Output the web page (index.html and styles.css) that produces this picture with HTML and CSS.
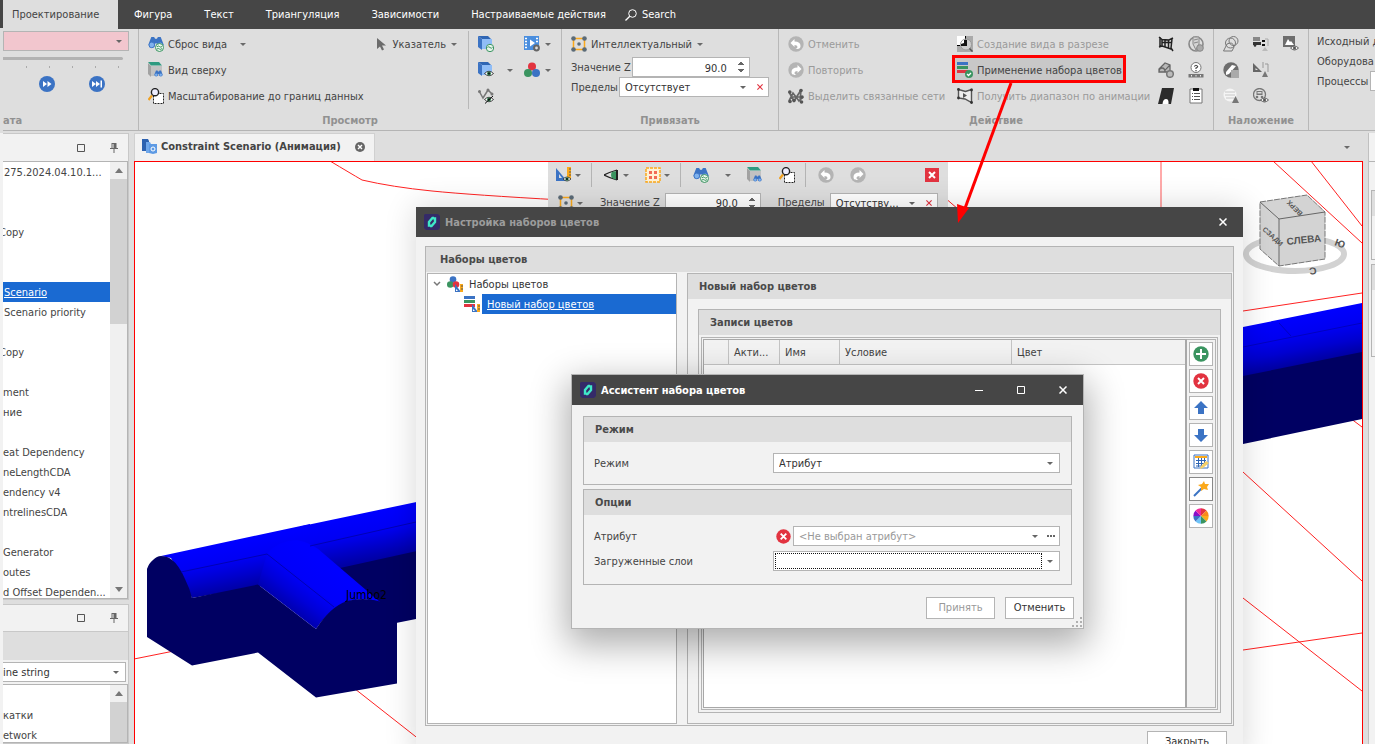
FILE: index.html
```html
<!DOCTYPE html>
<html lang="ru">
<head>
<meta charset="utf-8">
<title>Настройка наборов цветов</title>
<link rel="stylesheet" href="styles.css">
</head>
<body>
<svg class="sprite" aria-hidden="true">
  <symbol id="binocular" viewBox="0 0 16 16"><path d="M3 1h3l1 2h2l1-2h3l2 5 1 3-1 3H10L9 8H7l-1 4H1L0 9l1-3z" fill="#3b73c4"/><circle cx="3.5" cy="9.5" r="3" fill="#7fb2ee" stroke="#3b73c4"/><circle cx="12.5" cy="9.5" r="3" fill="#7fb2ee" stroke="#3b73c4"/></symbol>
  <symbol id="reset" viewBox="0 0 16 16"><use href="#binocular" width="16" height="15"/><circle cx="11.500" cy="11.500" r="4" fill="#e8f5ec" stroke="#3a9460"/><path d="M9 11q1.200-1.800 2.500-.5t2.500 0M9 13q1.200-1 2.500 0t2.500-.5" fill="none" stroke="#3a9460"/></symbol>
  <symbol id="cubeview" viewBox="0 0 16 16"><path d="M0 1l3 3v11l-3-3z" fill="#a2a2a2"/><path d="M3 4h11v10H3z" fill="#c2c2c2"/><path d="M0 0h11l3 3.500H3z" fill="#2e9a80"/><use href="#binocular" x="5" y="8" width="11" height="8"/></symbol>
  <symbol id="zoomext" viewBox="0 0 16 16"><path d="M5.500 5.500h10v10h-10z" fill="#fff" stroke="#222" stroke-dasharray="2 1"/><circle cx="7" cy="4.200" r="3.600" fill="#eef" stroke="#222" stroke-width="1.400"/><path d="M4 7.500L.500 12" stroke="#f0a020" stroke-width="2.200"/></symbol>
  <symbol id="pointer" viewBox="0 0 16 16"><path d="M4 2v11l3-2.500 2 4 2-1-2-4h4z" fill="#6c6c6c"/></symbol>
  <symbol id="cube" viewBox="0 0 16 16"><path d="M0 0h10l3 3H4z" fill="#2f66b4"/><path d="M0 0l4 3v11l-4-3z" fill="#3b73c4"/><path d="M4 3h10v10H4z" fill="#8fbdf7"/></symbol>
  <symbol id="cuberef" viewBox="0 0 16 16"><use href="#cube"/><circle cx="12" cy="12" r="3.700" fill="#e8f5ec" stroke="#3a9460"/><path d="M9.500 11.500q1.200-1.500 2.500 0t2.500 0" fill="none" stroke="#3a9460"/></symbol>
  <symbol id="eye" viewBox="0 0 16 16"><path d="M0 8q8-8 16 0-8 8-16 0z" fill="#fff" stroke="#222" stroke-width="1.500"/><circle cx="8" cy="8" r="3.500" fill="#2e7d4c"/><circle cx="8" cy="8" r="1.800" fill="#111"/></symbol>
  <symbol id="grayeye" viewBox="0 0 16 16"><path d="M0 8q8-8 16 0-8 8-16 0z" fill="#eee" stroke="#555" stroke-width="1.800"/><circle cx="8" cy="8" r="3" fill="#555"/></symbol>
  <symbol id="cubeeye" viewBox="0 0 16 16"><use href="#cube"/><use href="#eye" x="6" y="7" width="10" height="9"/></symbol>
  <symbol id="linehide" viewBox="0 0 16 16"><path d="M1 3l4 7 5-8 4 4" fill="none" stroke="#777" stroke-width="1.500"/><circle cx="1.500" cy="3.500" r="1.500" fill="#777"/><circle cx="10" cy="2" r="1.500" fill="#777"/><circle cx="14" cy="6" r="1.500" fill="#777"/><use href="#eye" x="6" y="7" width="10" height="9"/><path d="M7 15.500L15 8" stroke="#111"/></symbol>
  <symbol id="film" viewBox="0 0 16 16"><path d="M0 0h15v14H0z" fill="#4a8ede"/><path d="M1 2.500h2M1 5.500h2M1 8.500h2M1 11.500h2M12 2.500h2M12 5.500h2" stroke="#fff" stroke-width="1.300"/><path d="M6 3.500l5 3.500-5 3.500z" fill="#fff"/><circle cx="12.500" cy="12" r="2.400" fill="#dedede" stroke="#666" stroke-width="2"/></symbol>
  <symbol id="rgb" viewBox="0 0 16 16"><circle cx="8" cy="4.500" r="4" fill="#e23340"/><circle cx="4" cy="11" r="4" fill="#3a9460"/><circle cx="12" cy="11" r="4" fill="#3b73c4"/></symbol>
  <symbol id="snap" viewBox="0 0 16 16"><path d="M2.500 2.500h11v11h-11z" fill="none" stroke="#fba91b" stroke-width="1.500"/><g fill="#5b6b78"><circle cx="2.500" cy="2.500" r="2.300"/><circle cx="13.500" cy="2.500" r="2.300"/><circle cx="2.500" cy="13.500" r="2.300"/><circle cx="13.500" cy="13.500" r="2.300"/><circle cx="8" cy="8" r="1.800"/></g></symbol>
  <symbol id="undo" viewBox="0 0 16 16"><circle cx="8" cy="8" r="7.700" fill="#b4b4b4"/><path d="M2.500 7L6.500 3v2.500c4 0 6 1.500 6 4.500s-2.500 3-5 3c3-1 2.500-4-1-4V11z" fill="#fff"/></symbol>
  <symbol id="redo" viewBox="0 0 16 16"><g transform="translate(16 0) scale(-1 1)"><use href="#undo"/></g></symbol>
  <symbol id="network" viewBox="0 0 16 16"><path d="M1 4l5 9 7-11-1 11M1 13l4-8 6 8 4-4M3 9h9" fill="none" stroke="#666" stroke-width="1.700"/><g fill="#555"><circle cx="1.800" cy="4" r="1.800"/><circle cx="13" cy="2.500" r="1.800"/><circle cx="14" cy="9" r="1.800"/><circle cx="2" cy="13.500" r="1.800"/><circle cx="13.500" cy="14" r="1.800"/><circle cx="6" cy="12.500" r="1.800"/></g></symbol>
  <symbol id="section" viewBox="0 0 16 16"><path d="M0 0h16v16H0z" fill="#aaa"/><path d="M0 0h8v9H0z" fill="#fff"/><path d="M8 0h1v4H8zM0 9h3v1H0z" fill="#000"/><circle cx="9" cy="8.500" r="5.500" fill="#fff" fill-opacity=".4" stroke="#999"/><path d="M10 4v6H4v-2l3-1V4z" fill="#111"/><path d="M12.500 12.500l3 3" stroke="#555" stroke-width="1.500"/></symbol>
  <symbol id="bars" viewBox="0 0 16 16"><path d="M0 0h11v3H0z" fill="#3b73c4"/><path d="M0 4h11v3H0z" fill="#3a9460"/><path d="M0 8h11v3H0z" fill="#e23340"/></symbol>
  <symbol id="barsok" viewBox="0 0 16 16"><use href="#bars"/><circle cx="12" cy="12" r="4" fill="#3a9460"/><path d="M10 12l1.500 1.500L14 11" fill="none" stroke="#fff" stroke-width="1.300"/></symbol>
  <symbol id="range" viewBox="0 0 16 16"><path d="M1.500 1.500l7 2 6-2v13L8 11l-6.500-1z" fill="#eee" stroke="#555" stroke-width="1.400"/><path d="M6 5l4 2.500L6 10z" fill="#555"/><g fill="#333"><circle cx="1.500" cy="1.500" r="1.400"/><circle cx="14.500" cy="2" r="1.400"/><circle cx="1.500" cy="10" r="1.400"/><circle cx="14.500" cy="14.500" r="1.400"/></g></symbol>
  <symbol id="mesh" viewBox="0 0 16 16"><path d="M1 1l3 2.500 7 .5 4-2M1 11l3-1M4 3.500V10l9 3M14 3l-1 9 2 3M2 1v10M4 6.500h10M7 3.500V11M10.500 4v8" fill="none" stroke="#222" stroke-width="1.500"/></symbol>
  <symbol id="drill" viewBox="0 0 16 16"><circle cx="8" cy="8" r="7" fill="none" stroke="#888" stroke-width="1.600"/><path d="M5 1h6v7l-3 6-3-6zM6 4l4-1M6 7l4-1" fill="#d4d4d4" stroke="#888"/><circle cx="12" cy="12" r="3.300" fill="#aaa" stroke="#888"/></symbol>
  <symbol id="solidadd" viewBox="0 0 16 16"><path d="M1 10V7l6-6 5 2v7zM1 10q0-4 3-4t3 4l0-2 5-5" fill="#b8b8b8" stroke="#666" stroke-width="1.300"/><circle cx="12" cy="12" r="3.300" fill="#bbb" stroke="#777" stroke-width="1.500"/></symbol>
  <symbol id="query" viewBox="0 0 16 16"><circle cx="8" cy="5.500" r="5" fill="#fff" stroke="#777"/><path d="M6.300 4.500q1.700-2.500 3.400 0-.2 1-1.700 1.500v1M8 8v1.200" stroke="#444" fill="none" stroke-width="1.200"/><path d="M.500 12h15v3.500H.500z" fill="#777"/><path d="M3.500 13v1.500M8 13v1.500M12.500 13v1.500" stroke="#eee"/></symbol>
  <symbol id="portal" viewBox="0 0 16 16"><path d="M4 0h12l-3 16H0z" fill="#2b2b2b"/><path d="M4.500 16q.5-5 3.500-5t2.500 5z" fill="#fff"/></symbol>
  <symbol id="clip" viewBox="0 0 16 16"><path d="M2 1h12v14H2z" fill="#fff" stroke="#777"/><path d="M5 0h6v3H5z" fill="#111"/><path d="M4 5.500h1M6 5.500h6M4 8.500h1M6 8.500h6M4 11.500h1M6 11.500h6" stroke="#555"/></symbol>
  <symbol id="contours" viewBox="0 0 16 16"><g fill="none" stroke="#777"><circle cx="10.500" cy="5" r="4.500"/><circle cx="7.500" cy="7" r="5"/><path d="M.500 15L4 8q6-3 7 3l-2 4z"/></g></symbol>
  <symbol id="truck" viewBox="0 0 16 16"><path d="M0 1h7v4H0z" fill="#888"/><path d="M0 6h8v3H0z" fill="#333"/><circle cx="2" cy="9.500" r="1.300" fill="#333"/><path d="M9 4h3v2H9zM9 8h3v2H9z" fill="#111"/><path d="M12 3h3v7" fill="none" stroke="#aaa"/><path d="M9 15l3-4 3 4z" fill="#bbb"/></symbol>
  <symbol id="imgeye" viewBox="0 0 16 16"><path d="M0 0h12v11H0z" fill="#6d6d6d"/><path d="M2 9l3-6 2 3 1-1 3 4z" fill="#fff"/><use href="#grayeye" x="7" y="8" width="9" height="8"/></symbol>
  <symbol id="halfcircle" viewBox="0 0 16 16"><circle cx="8" cy="8" r="7.700" fill="#6d6d6d"/><path d="M3 10l6-7 4 1-7 8-3 1z" fill="#fff"/><path d="M8 8h8v8H8z" fill="#aaa"/></symbol>
  <symbol id="ruler" viewBox="0 0 16 16"><path d="M0 1l9 9H0z" fill="#666"/><path d="M2.500 6v2H5z" fill="#dedede"/><path d="M9 1h2M9 3h2M9 5h2M12 2h3v8" stroke="#999" fill="none"/><path d="M9 15l3-6 3 6z" fill="#777"/></symbol>
  <symbol id="globe" viewBox="0 0 16 16"><circle cx="7" cy="7" r="6.500" fill="#f5f5f5"/><path d="M2 4h10M2 7h10M3 10h8" stroke="#c8c8c8"/><path d="M9 15l3.500-7 3.500 7z" fill="#777"/></symbol>
  <symbol id="dumper" viewBox="0 0 16 16"><circle cx="6.500" cy="6.500" r="6" fill="none" stroke="#777" stroke-width="1.300"/><path d="M3.500 3h6v4h-6z" fill="#777"/><path d="M4.500 4h4v1.500h-4z" fill="#dedede"/><circle cx="4" cy="9" r="1.300" fill="#777"/><circle cx="9" cy="9" r="1.300" fill="#777"/><use href="#grayeye" x="7" y="8" width="9" height="8"/></symbol>
  <symbol id="logo" viewBox="0 0 16 16"><path d="M1 0h13l2 2v12l-2 2H2l-2-2V1z" fill="#342a68"/><path d="M6.500 11.500H5L5 8l3.500-4H10M9.500 4.500H11V8l-3.500 4H6" fill="none" stroke="#3fe8c8" stroke-width="2.400"/></symbol>
  <symbol id="tabicon" viewBox="0 0 16 16"><path d="M0 0h6l1 2v10H0z" fill="#2d62b0"/><path d="M4 3h4l1 2h3v9H4z" fill="#6fa7ea"/><path d="M7 5h8v9l-4 1-4-1z" fill="#5d9ae4"/><circle cx="11" cy="10" r="2" fill="none" stroke="#fff"/></symbol>
  <symbol id="design" viewBox="0 0 16 16"><path d="M0 1l11 13H0z" fill="#3b73c4"/><path d="M3 7v4h3z" fill="#dedede"/><path d="M11 0h4v12h-4z" fill="#fba91b"/><path d="M13 2h2M13 5h2M13 8h2" stroke="#555"/><use href="#eye" x="6" y="8" width="10" height="8"/></symbol>
  <symbol id="sideeye" viewBox="0 0 16 16"><path d="M0 8q6-3 13-5M0 8q6 3 13 5" fill="none" stroke="#222" stroke-width="1.300"/><path d="M8 5q5-1 5-1v9l-5-2q-2-3 0-6z" fill="#3a9460"/><path d="M12 3h2v10h-2z" fill="#222"/></symbol>
  <symbol id="select4" viewBox="0 0 16 16"><path d="M1 1h14v14H1z" fill="#fff2d5" stroke="#fba91b" stroke-width="1.500" stroke-dasharray="3 1"/><path d="M4 4h3v3H4zM9 4h3v3H9zM4 9h3v3H4zM9 9h3v3H9z" fill="#f26b55"/></symbol>
  <symbol id="xsquare" viewBox="0 0 16 16"><path d="M1 1h14v14H1z" fill="#e23340"/><path d="M5 5l6 6M11 5l-6 6" stroke="#fff" stroke-width="2"/></symbol>
  <symbol id="xcircle" viewBox="0 0 16 16"><circle cx="8" cy="8" r="7.700" fill="#e23340"/><path d="M5 5l6 6M11 5l-6 6" stroke="#fff" stroke-width="2"/></symbol>
  <symbol id="add" viewBox="0 0 16 16"><circle cx="8" cy="8" r="7.700" fill="#3a9460"/><path d="M8 3v10M3 8h10" stroke="#fff" stroke-width="2"/></symbol>
  <symbol id="up" viewBox="0 0 16 16"><path d="M8 1l7 7h-4v6H5V8H1z" fill="#3b73c4"/></symbol>
  <symbol id="down" viewBox="0 0 16 16"><path d="M8 15l7-7h-4V2H5v6H1z" fill="#3b73c4"/></symbol>
  <symbol id="tableedit" viewBox="0 0 16 16"><path d="M1 1h14v13H1z" fill="#fff" stroke="#3b73c4"/><path d="M2 2h12v2H2z" fill="#fba91b"/><path d="M3 6.500h10M3 9.500h8M3 12h5M5.500 4v9M8.500 4v9M11.500 4v6" stroke="#2f66b4"/><path d="M7 15l1-3 5-5 3 2-6 5z" fill="#f5cf66"/></symbol>
  <symbol id="wand" viewBox="0 0 16 16"><path d="M1 15l8-8" stroke="#3b73c4" stroke-width="2"/><path d="M11 0l1 3 4 0-2 3 1 3-4-1-3 2V6L5 4l4-1z" fill="#fba91b"/></symbol>
  <symbol id="wheel" viewBox="0 0 16 16"><path d="M8 8V.300A7.700 7.700 0 0 1 13.500 2.500z" fill="#e23340"/><path d="M8 8l5.500-5.500A7.700 7.700 0 0 1 15.700 8z" fill="#f98a1c"/><path d="M8 8h7.700a7.700 7.700 0 0 1-2.200 5.500z" fill="#fbab1b"/><path d="M8 8l5.500 5.500A7.700 7.700 0 0 1 8 15.700z" fill="#3a9460"/><path d="M8 8v7.700a7.700 7.700 0 0 1-5.500-2.200z" fill="#6fc3f7"/><path d="M8 8l-5.500 5.500A7.700 7.700 0 0 1 .300 8z" fill="#3b73c4"/><path d="M8 8H.300a7.700 7.700 0 0 1 2.200-5.500z" fill="#8a10c8"/><path d="M8 8L2.500 2.500A7.700 7.700 0 0 1 8 .300z" fill="#f22a9c"/></symbol>
  <symbol id="rulerbadge" viewBox="0 0 8 8"><path d="M0 0l6 8H0z" fill="#3b73c4"/><path d="M5 0h3v8H5z" fill="#fba91b"/><path d="M1 5l2 2H1z" fill="#fff"/><path d="M6 2h2M6 5h2" stroke="#555"/></symbol>
  <symbol id="setroot" viewBox="0 0 16 16"><circle cx="6" cy="3.500" r="3.300" fill="#3b73c4"/><circle cx="3.300" cy="8.500" r="3.300" fill="#3a9460"/><circle cx="9" cy="8.500" r="3.300" fill="#e23340"/><use href="#rulerbadge" x="8" y="8" width="8" height="8"/></symbol>
  <symbol id="setitem" viewBox="0 0 16 16"><use href="#bars"/><use href="#rulerbadge" x="8" y="8" width="8" height="8"/></symbol>
  <symbol id="max" viewBox="0 0 8 8"><path d="M.500 .500h7v7h-7z" fill="none" stroke="currentColor"/></symbol>
  <symbol id="min" viewBox="0 0 8 8"><path d="M0 4.500h8" stroke="currentColor"/></symbol>
  <symbol id="close" viewBox="0 0 8 8"><path d="M.500 .500l7 7M7.500 .500l-7 7" stroke="currentColor" stroke-width="1.500"/></symbol>
  <symbol id="pin" viewBox="0 0 8 10"><path d="M1.500 0h5v5h1.500v1H0V5h1.500zM2.500 1v4h1V1zM3.500 6h1v4h-1z" fill="#666" fill-rule="evenodd"/></symbol>
  <symbol id="ff" viewBox="0 0 16 16"><circle cx="8" cy="8" r="8" fill="#3b73c4"/><path d="M4 5l4 3-4 3zM8.500 5l4 3-4 3z" fill="#fff"/></symbol>
  <symbol id="end" viewBox="0 0 16 16"><circle cx="8" cy="8" r="8" fill="#3b73c4"/><path d="M3 5l4 3-4 3zM7 5l4 3-4 3zM11.500 4.500h1.500v7h-1.500z" fill="#fff"/></symbol>
  <symbol id="search" viewBox="0 0 12 12"><circle cx="7.500" cy="4.500" r="3.800" fill="none" stroke="#fff"/><path d="M4.800 7.200L.500 11.500" stroke="#fff" stroke-width="1.300"/></symbol>
  <symbol id="tabclose" viewBox="0 0 10 10"><circle cx="5" cy="5" r="5" fill="#666"/><path d="M3 3l4 4M7 3L3 7" stroke="#fff" stroke-width="1.400"/></symbol>
</svg>

<div class="frame">
<div class="edge" aria-hidden="true"></div>
<div class="app">
  <nav class="menu">
    <a class="menu-item menu-active" href="#">Проектирование</a>
    <a class="menu-item" href="#">Фигура</a>
    <a class="menu-item" href="#">Текст</a>
    <a class="menu-item" href="#">Триангуляция</a>
    <a class="menu-item" href="#">Зависимости</a>
    <a class="menu-item" href="#">Настраиваемые действия</a>
    <a class="menu-item menu-search" href="#"><svg class="icon-12"><use href="#search"/></svg>Search</a>
  </nav>

  <header class="ribbon">
    <section class="group group-data">
      <div class="group-body">
        <div class="combo combo-pink"><select aria-label="Дата"><option></option></select></div>
        <div class="track"></div>
        <div class="ticks"><i></i><i></i><i></i><i></i><i></i></div>
        <div class="player">
          <button class="tool" aria-label="Вперёд"><svg class="icon"><use href="#ff"/></svg></button>
          <button class="tool" aria-label="В конец"><svg class="icon"><use href="#end"/></svg></button>
        </div>
      </div>
      <h2 class="caption caption-left">ата</h2>
    </section>
    <section class="group group-view">
      <div class="group-body view-cols">
        <div class="stack">
          <button class="tool"><svg class="icon"><use href="#reset"/></svg>Сброс вида<span class="arrow arrow-far"></span></button>
          <button class="tool"><svg class="icon"><use href="#cubeview"/></svg>Вид сверху</button>
          <button class="tool"><svg class="icon"><use href="#zoomext"/></svg>Масштабирование до границ данных</button>
        </div>
        <button class="tool tool-pointer"><svg class="icon"><use href="#pointer"/></svg>Указатель<span class="arrow"></span></button>
        <div class="view-icons">
          <button class="tool" aria-label="Обновить"><svg class="icon"><use href="#cuberef"/></svg></button>
          <button class="tool" aria-label="Анимация"><svg class="icon"><use href="#film"/></svg><span class="arrow"></span></button>
          <button class="tool" aria-label="Видимость"><svg class="icon"><use href="#cubeeye"/></svg><span class="arrow arrow-far"></span></button>
          <button class="tool" aria-label="Цвета"><svg class="icon"><use href="#rgb"/></svg><span class="arrow"></span></button>
          <button class="tool" aria-label="Скрыть линии"><svg class="icon"><use href="#linehide"/></svg></button>
        </div>
      </div>
      <h2 class="caption">Просмотр</h2>
    </section>
    <section class="group group-snap">
      <div class="group-body">
        <button class="tool"><svg class="icon"><use href="#snap"/></svg>Интеллектуальный<span class="arrow"></span></button>
        <div class="field"><label for="z1">Значение Z</label><div class="spin"><input id="z1" value="90.0"><span class="spin-arrows"></span></div></div>
        <div class="field"><label for="lim1">Пределы</label><div class="combo combo-clear combo-limit"><select id="lim1"><option>Отсутствует</option></select><svg class="clear-x"><use href="#close"/></svg></div></div>
      </div>
      <h2 class="caption">Привязать</h2>
    </section>
    <section class="group group-action">
      <div class="group-body action-grid">
        <button class="tool off"><svg class="icon"><use href="#undo"/></svg>Отменить</button>
        <button class="tool off"><svg class="icon"><use href="#section"/></svg>Создание вида в разрезе</button>
        <button class="tool" aria-label="Сетка"><svg class="icon"><use href="#mesh"/></svg></button>
        <button class="tool" aria-label="Бурение"><svg class="icon"><use href="#drill"/></svg></button>
        <button class="tool off"><svg class="icon"><use href="#redo"/></svg>Повторить</button>
        <button class="tool tool-hot"><svg class="icon"><use href="#barsok"/></svg>Применение набора цветов</button>
        <button class="tool" aria-label="Добавить тело"><svg class="icon"><use href="#solidadd"/></svg></button>
        <button class="tool" aria-label="Запрос"><svg class="icon"><use href="#query"/></svg></button>
        <button class="tool off"><svg class="icon"><use href="#network"/></svg>Выделить связанные сети</button>
        <button class="tool off"><svg class="icon"><use href="#range"/></svg>Получить диапазон по анимации</button>
        <button class="tool" aria-label="Портал"><svg class="icon"><use href="#portal"/></svg></button>
        <button class="tool" aria-label="Отчёт"><svg class="icon"><use href="#clip"/></svg></button>
      </div>
      <h2 class="caption">Действие</h2>
    </section>
    <section class="group group-overlay">
      <div class="group-body overlay-grid">
        <button class="tool" aria-label="Контуры"><svg class="icon"><use href="#contours"/></svg></button>
        <button class="tool" aria-label="Транспорт"><svg class="icon"><use href="#truck"/></svg></button>
        <button class="tool" aria-label="Изображение"><svg class="icon"><use href="#imgeye"/></svg></button>
        <button class="tool" aria-label="Уклон"><svg class="icon"><use href="#halfcircle"/></svg></button>
        <button class="tool" aria-label="Проект"><svg class="icon"><use href="#ruler"/></svg></button>
        <span></span>
        <button class="tool" aria-label="Модель"><svg class="icon"><use href="#globe"/></svg></button>
        <button class="tool" aria-label="Оборудование"><svg class="icon"><use href="#dumper"/></svg></button>
      </div>
      <h2 class="caption">Наложение</h2>
    </section>
    <section class="group group-last">
      <div class="last-row">Исходный д</div>
      <div class="last-row">Оборудова</div>
      <div class="last-row"><label for="proc">Процессы</label><input id="proc"></div>
    </section>
  </header>

  <main class="work">
    <aside class="left">
      <section class="pane pane-list">
        <header class="pane-head"><svg class="icon-8"><use href="#max"/></svg><svg class="icon-pin"><use href="#pin"/></svg></header>
        <div class="listbox">
          <ul class="rows">
            <li class="full">275.2024.04.10.1...</li><li></li><li></li><li class="cut">Copy</li><li></li><li></li>
            <li class="full selected">Scenario</li><li class="full">Scenario priority</li><li></li><li class="cut">Copy</li><li></li>
            <li>ment</li><li>ние</li><li></li><li>eat Dependency</li><li>neLengthCDA</li><li>endency v4</li><li>ntrelinesCDA</li><li></li>
            <li>Generator</li><li>outes</li><li>d Offset Dependen...</li>
          </ul>
          <div class="scroll"><span class="tri-up"></span><div class="thumb"></div><span class="tri-down"></span></div>
        </div>
      </section>
      <section class="pane pane-second">
        <header class="pane-head"><svg class="icon-8"><use href="#max"/></svg><svg class="icon-pin"><use href="#pin"/></svg></header>
        <div class="band"></div>
        <div class="combo combo-line"><select aria-label="Тип"><option>ine string</option></select></div>
        <div class="listbox">
          <ul class="rows"><li></li><li>катки</li><li>etwork</li></ul>
          <div class="scroll"><span class="tri-up"></span><div class="thumb thumb-grow"></div></div>
        </div>
      </section>
    </aside>

    <section class="center">
      <div class="doc-tabs">
        <div class="doc-tab"><svg class="icon"><use href="#tabicon"/></svg>Constraint Scenario (Анимация)<svg class="icon-10"><use href="#tabclose"/></svg></div>
        <span class="arrow"></span>
      </div>
      <div class="viewport">
        <svg class="scene" viewBox="135 162 1227 582" preserveAspectRatio="xMinYMin slice">
          <defs>
            <linearGradient id="gm" gradientUnits="userSpaceOnUse" x1="220" y1="546" x2="229" y2="591"><stop offset="0" stop-color="#00f"/><stop offset=".35" stop-color="#0000f4"/><stop offset=".7" stop-color="#0000cc"/><stop offset="1" stop-color="#0000a4"/></linearGradient>
            <linearGradient id="gf" gradientUnits="userSpaceOnUse" x1="380" y1="510" x2="389" y2="557"><stop offset="0" stop-color="#00f"/><stop offset=".4" stop-color="#0000f4"/><stop offset=".7" stop-color="#0000cc"/><stop offset="1" stop-color="#0000a4"/></linearGradient>
            <linearGradient id="gb" gradientUnits="userSpaceOnUse" x1="325" y1="563" x2="290" y2="609"><stop offset="0" stop-color="#00f"/><stop offset=".45" stop-color="#0000fa"/><stop offset=".75" stop-color="#0000d8"/><stop offset="1" stop-color="#0000b0"/></linearGradient>
            <linearGradient id="gr" gradientUnits="userSpaceOnUse" x1="1300" y1="315" x2="1309" y2="363"><stop offset="0" stop-color="#00f"/><stop offset=".4" stop-color="#0000f0"/><stop offset=".7" stop-color="#0000d0"/><stop offset="1" stop-color="#0000a0"/></linearGradient>
          </defs>
          <g fill="none" stroke="#f22" stroke-width="1">
            <path d="M330 161q20 12 32 19 30 7 70 11t130 9M936 190l30 26M1273 161l89 82M1311 161l51 65M1243 311l119-18M1350 418l12 9M1243 472l119 109M1243 598l119 93M1243 650l119-17M134 659l40-8M350 685l70 55"/>
            <path d="M1161 161v60" stroke="#faa" stroke-width="2"/>
          </g>
          <path d="M320 560l96-12 10 69-30 6z" fill="#000062"/>
          <path d="M161 556L310 524v50l-36 10-82 14-21-40z" fill="url(#gm)"/>
          <path d="M300 526.500L426 500v49l-86 19-40 8z" fill="url(#gf)"/>
          <path d="M147 637v-68q2-6 6-9 4-4 8-4 6 0 10 3 8 6 14 20 5 10 7 19l66-13.500 58 44.500 81-20v74.500l-81 14-58-45-66 13z" fill="#000062"/>
          <path d="M258 584.500L267 554q10-13 30-14 16 3 27 14l56 48q-14-5-30-1-20 7-34 28z" fill="url(#gb)"/>
          <path d="M316 629q14-22 31-28 16-4 31 0 10 4 19 16v20h-81z" fill="#000062"/>
          <path d="M181 572l86-18 67 53M310 546l106-24" fill="none" stroke="#0000b4" stroke-width="1"/>
          <path d="M1243 327l119-24v50l-119 24z" fill="url(#gr)"/>
          <path d="M1243 376l119-24v67l-119 25z" fill="#000062"/>
          <path d="M1243 347l119-24M1279 323l12 13" fill="none" stroke="#0000c0"/>
          <text class="scene-label" x="346" y="599">Jumbo2</text>
          <ellipse cx="1295" cy="254" rx="49" ry="17" fill="none" stroke="#d2d2d2" stroke-width="6"/>
          <path d="M1260 202l47-7 18 17v47l-46 7-19-17z" fill="#d3d3d3" stroke="#777" stroke-dasharray="6 1"/>
          <path d="M1260 202l19 17 46-7M1279 219v47" fill="none" stroke="#666"/>
          <g class="cube-text"><text transform="translate(1287 245) rotate(-6)">СЛЕВА</text><text class="cube-small" transform="translate(1262 230) rotate(42)">СЗАДИ</text><text class="cube-small" transform="translate(1303 213) rotate(-135)">ВЕРХ</text><text transform="translate(1316 267) rotate(172)">С</text><text transform="translate(1334 245) rotate(20)">Ю</text></g>
        </svg>
        <div class="floatbar">
          <div class="float-row">
            <button class="tool" aria-label="Проект"><svg class="icon"><use href="#design"/></svg><span class="arrow"></span></button><i class="sep"></i>
            <button class="tool" aria-label="Вид"><svg class="icon"><use href="#sideeye"/></svg><span class="arrow"></span></button>
            <button class="tool" aria-label="Выбор"><svg class="icon"><use href="#select4"/></svg><span class="arrow"></span></button><i class="sep"></i>
            <button class="tool" aria-label="Сброс"><svg class="icon"><use href="#reset"/></svg><span class="arrow arrow-far"></span></button>
            <button class="tool" aria-label="Сверху"><svg class="icon"><use href="#cubeview"/></svg></button>
            <button class="tool" aria-label="Границы"><svg class="icon"><use href="#zoomext"/></svg></button><i class="sep"></i>
            <button class="tool" aria-label="Отменить"><svg class="icon"><use href="#undo"/></svg></button>
            <button class="tool" aria-label="Повторить"><svg class="icon"><use href="#redo"/></svg></button>
            <button class="tool float-close" aria-label="Закрыть панель"><svg class="icon"><use href="#xsquare"/></svg></button>
          </div>
          <div class="float-row float-fields">
            <button class="tool" aria-label="Привязка"><svg class="icon"><use href="#snap"/></svg><span class="arrow"></span></button>
            <label for="z2">Значение Z</label><div class="spin"><input id="z2" value="90.0"><span class="spin-arrows"></span></div>
            <label for="lim2">Пределы</label><div class="combo combo-clear combo-short"><select id="lim2"><option>Отсутству...</option></select><svg class="clear-x"><use href="#close"/></svg></div>
          </div>
        </div>
      </div>
    </section>

    <aside class="right"><div class="right-head"></div><div class="right-box right-a"></div><div class="right-box right-b"></div></aside>
  </main>
</div>
</div>

<section class="window window-sets" aria-label="Настройка наборов цветов">
  <header class="titlebar"><svg class="icon"><use href="#logo"/></svg><h1 class="dim">Настройка наборов цветов</h1><button class="winbtn" aria-label="Закрыть окно"><svg class="icon-8"><use href="#close"/></svg></button></header>
  <div class="sets-body">
    <div class="box">
      <h2 class="box-head head-wide">Наборы цветов</h2>
      <div class="split">
        <ul class="tree">
          <li class="tree-row"><svg class="chev" viewBox="0 0 8 6"><path d="M1 1l3 3 3-3" fill="none" stroke="#777" stroke-width="1.500"/></svg><svg class="icon"><use href="#setroot"/></svg><span class="tree-text">Наборы цветов</span></li>
          <li class="tree-row tree-child"><svg class="icon"><use href="#setitem"/></svg><span class="tree-text tree-selected">Новый набор цветов</span></li>
        </ul>
        <div class="box box-set">
          <h2 class="box-head">Новый набор цветов</h2>
          <div class="box box-records">
            <h2 class="box-head">Записи цветов</h2>
            <div class="grid-frame">
              <div class="grid-area">
                <table class="records"><thead><tr><th class="c-mark"></th><th class="c-active">Акти...</th><th class="c-name">Имя</th><th class="c-cond">Условие</th><th>Цвет</th></tr></thead></table>
              </div>
              <div class="side">
                <button class="sq" aria-label="Добавить"><svg class="icon"><use href="#add"/></svg></button>
                <button class="sq" aria-label="Удалить"><svg class="icon"><use href="#xcircle"/></svg></button>
                <button class="sq" aria-label="Вверх"><svg class="icon"><use href="#up"/></svg></button>
                <button class="sq" aria-label="Вниз"><svg class="icon"><use href="#down"/></svg></button>
                <button class="sq" aria-label="Редактировать"><svg class="icon"><use href="#tableedit"/></svg></button>
                <button class="sq sq-focus" aria-label="Ассистент"><svg class="icon"><use href="#wand"/></svg></button>
                <button class="sq" aria-label="Палитра"><svg class="icon"><use href="#wheel"/></svg></button>
              </div>
            </div>
          </div>
        </div>
      </div>
    </div>
    <div class="sets-foot"><button class="btn btn-wide">Закрыть</button></div>
  </div>
</section>

<section class="window window-assist" aria-label="Ассистент набора цветов">
  <header class="titlebar"><svg class="icon"><use href="#logo"/></svg><h1>Ассистент набора цветов</h1>
    <button class="winbtn" aria-label="Свернуть"><svg class="icon-8"><use href="#min"/></svg></button>
    <button class="winbtn" aria-label="Развернуть"><svg class="icon-8"><use href="#max"/></svg></button>
    <button class="winbtn" aria-label="Закрыть ассистент"><svg class="icon-8"><use href="#close"/></svg></button>
  </header>
  <div class="assist-body">
    <fieldset class="box box-form">
      <h2 class="box-head">Режим</h2>
      <div class="form-row"><label for="mode">Режим</label><div class="combo"><select id="mode"><option>Атрибут</option></select></div></div>
    </fieldset>
    <fieldset class="box box-form box-options">
      <h2 class="box-head">Опции</h2>
      <div class="form-row"><label for="attr">Атрибут</label><svg class="icon-15"><use href="#xcircle"/></svg><div class="combo combo-more"><select id="attr" class="placeholder"><option>&lt;Не выбран атрибут&gt;</option></select><span class="dots"></span></div></div>
      <div class="form-row"><label for="layers">Загруженные слои</label><div class="combo combo-focus"><select id="layers"><option></option></select></div></div>
    </fieldset>
    <div class="assist-foot"><button class="btn" disabled>Принять</button><button class="btn">Отменить</button></div>
  </div>
  <svg class="grip" viewBox="0 0 11 11"><path d="M8 0h2v2H8zM8 4h2v2H8zM8 8h2v2H8zM4 4h2v2H4zM4 8h2v2H4zM0 8h2v2H0z" fill="#b0b0b0"/></svg>
</section>

<svg class="callout" viewBox="0 0 180 180" aria-hidden="true"><path d="M4.500 3.500h171v25h-171z" fill="none" stroke="#f00" stroke-width="3"/><path d="M62 30L15 158" stroke="#f00" stroke-width="3"/><path d="M9 170l-1-19 12 4z" fill="#f00"/></svg>
</body>
</html>
```

FILE: styles.css
```css
* { box-sizing: border-box; }
html, body { height: 100%; margin: 0; }
body { overflow: hidden; position: relative; background: #dedede; color: #444; font: 11px/20px "DejaVu Sans Condensed", "DejaVu Sans", sans-serif; font-stretch: condensed; }
h1, h2 { margin: 0; font-size: 11px; font-weight: 700; }
ul { margin: 0; padding: 0; list-style: none; }
a { color: inherit; text-decoration: none; }
button, input, select { font: inherit; color: inherit; margin: 0; padding: 0; border: 0; border-radius: 0; background: none; outline: 0; }
select { appearance: none; width: 100%; height: 100%; padding: 1px 5px 0; color: #333; }
.sprite { position: absolute; width: 0; height: 0; }
.icon { width: 16px; height: 16px; flex: none; }
.icon-8 { width: 8px; height: 8px; flex: none; }
.icon-10 { width: 10px; height: 10px; flex: none; }
.icon-12 { width: 12px; height: 12px; flex: none; }
.icon-15 { width: 15px; height: 15px; flex: none; }
.icon-pin { width: 8px; height: 10px; flex: none; }

.frame { display: flex; height: 100%; }
.edge { flex: none; width: 3px; background: linear-gradient(#464646 28px, #dedede 28px, #dedede 133px, #f2f2f2 133px); }
.app { flex: 1; min-width: 0; display: flex; flex-direction: column; }

.menu { display: flex; flex: none; height: 29px; background: #464646; color: #fff; overflow: hidden; }
.menu-item { display: flex; align-items: center; padding: 0 16px; white-space: nowrap; }
.menu-active { width: 115px; padding: 0 9px; background: #dedede; color: #444; }
.menu-search { gap: 5px; padding: 0 3px; }

.ribbon { display: flex; flex: none; border-bottom: 1px solid #b4b4b4; overflow: hidden; }
.group { flex: none; border-right: 1px solid #b8b8b8; white-space: nowrap; }
.group-body { height: 80px; padding: 2px 9px 0; }
.caption { height: 21px; line-height: 23px; text-align: center; color: #919191; }
.caption-left { text-align: left; }
.tool { display: flex; align-items: center; gap: 4px; height: 26px; line-height: 21px; }
.off { color: #9a9a9a; }
.arrow { flex: none; border: 3px solid transparent; border-top-color: #6a6a6a; border-bottom: 0; margin-left: 1px; }
.arrow-far { margin-left: 9px; }

.group-data { width: 136px; }
.group-data .group-body { padding: 2px 9px 0 0; }
.track { height: 3px; margin: 6px 6px 0 0; border-radius: 0 2px 2px 0; background: #b2b2b2; }
.ticks { display: flex; justify-content: space-between; padding: 6px 10px 0 23px; }
.ticks i { width: 1px; height: 2px; background: #aaa; }
.player { display: flex; gap: 34px; padding: 3px 0 0 36px; }

.group-view { width: 423px; }
.view-cols { display: flex; align-items: flex-start; justify-content: space-between; padding-right: 7px; }
.stack { display: flex; flex-direction: column; align-items: flex-start; }
.tool-pointer { margin-left: auto; padding-right: 11px; }
.view-icons { display: grid; grid-template-columns: 46px 30px; padding-left: 9px; border-left: 1px solid #b8b8b8; }

.group-snap { width: 217px; }
.field { display: flex; gap: 1px; height: 20px; line-height: 21px; }
.spin { position: relative; width: 118px; height: 20px; border: 1px solid #b4b4b4; background: #fff; }
.spin input { width: 100%; height: 18px; padding-right: 22px; text-align: right; color: #333; }
.spin-arrows { position: absolute; right: 5px; top: 4px; width: 6px; height: 10px; background: linear-gradient(#666, #666) 2px 0 / 2px 1px no-repeat, linear-gradient(#666, #666) 1px 1px / 4px 1px no-repeat, linear-gradient(#666, #666) 0 2px / 6px 1px no-repeat, linear-gradient(#666, #666) 0 7px / 6px 1px no-repeat, linear-gradient(#666, #666) 1px 8px / 4px 1px no-repeat, linear-gradient(#666, #666) 2px 9px / 2px 1px no-repeat; }
.combo { position: relative; height: 20px; border: 1px solid #b4b4b4; background: #fff; line-height: 18px; }
.combo-pink.combo { background: #f2c6ce; }
.combo::after { content: ""; position: absolute; right: 6px; top: 8px; border: 3px solid transparent; border-top-color: #666; border-bottom: 0; pointer-events: none; }
.combo-clear::after { right: 22px; }
.combo-limit { width: 150px; }
.combo-short { width: 108px; }
.clear-x { position: absolute; right: 5px; top: 6px; width: 6px; height: 6px; color: #e23340; }

.group-action { width: 435px; }
.action-grid { display: grid; grid-template-columns: 169px 201px 30px 16px; grid-auto-rows: 26px; }
.tool-hot { width: 173px; margin-left: -5px; padding-left: 5px; background: #c8c8c8; }
.group-overlay { width: 95px; }
.overlay-grid { display: grid; grid-template-columns: repeat(3, 30px); grid-auto-rows: 26px; }
.group-last { flex: 1; min-width: 0; padding: 2px 0 0 8px; border-right: 0; overflow: hidden; }
.last-row { display: flex; gap: 2px; height: 20px; line-height: 21px; }
.last-row input { width: 60px; border: 1px solid #b4b4b4; background: #fff; }

.work { flex: 1; min-height: 0; display: flex; padding-top: 2px; }
.left { flex: none; width: 126px; display: flex; flex-direction: column; gap: 4px; }
.pane { display: flex; flex-direction: column; border: 1px solid #c8c8c8; border-left: 0; background: #f2f2f2; }
.pane-list { flex: none; }
.pane-second { flex: 1; min-height: 0; }
.pane-head { display: flex; align-items: center; justify-content: flex-end; gap: 25px; height: 27px; flex: none; padding-right: 10px; color: #555; }
.pane-second .pane-head { height: 26px; }
.band { flex: none; height: 29px; border-top: 1px solid #c8c8c8; background: #dedede; }
.combo-line { flex: none; margin: 2px 2px 2px 0; border-left: 0; }
.combo-line select { padding: 1px 0 0; }
.listbox { display: flex; flex: 1; min-height: 0; border: 1px solid #b4b4b4; border-left: 0; background: #fff; overflow: hidden; }
.rows { flex: 1; min-width: 0; overflow: hidden; }
.rows li { height: 20px; line-height: 21px; white-space: nowrap; }
.pane-list .listbox { flex: none; height: 438px; }
.rows .full { padding-left: 1px; }
.rows .cut { text-indent: -4px; }
.selected { background: #1a6ad2; color: #fff; text-decoration: underline; }
.scroll { flex: none; width: 17px; display: flex; flex-direction: column; align-items: center; background: #f0f0f0; }
.tri-up { margin: 6px 0; border: 4px solid transparent; border-bottom: 5px solid #777; border-top: 0; }
.tri-down { margin: auto 0 6px; border: 4px solid transparent; border-top: 5px solid #777; border-bottom: 0; }
.thumb { width: 17px; height: 145px; background: #d2d2d2; }
.thumb-grow { flex: 1; }

.center { flex: 1; min-width: 0; display: flex; flex-direction: column; padding: 0 5px; }
.doc-tabs { flex: none; display: flex; align-items: center; justify-content: space-between; height: 28px; padding-right: 13px; }
.doc-tab { display: flex; align-items: center; gap: 3px; height: 28px; padding: 0 9px 1px 7px; border: 1px solid #d0d0d0; border-bottom: 0; background: #f2f2f2; font-weight: 700; }
.doc-tab .icon-10 { margin-left: 11px; }
.viewport { position: relative; flex: 1; min-height: 0; border: 1px solid #f00; border-bottom: 0; background: #fff; overflow: hidden; }
.scene { position: absolute; inset: 0; width: 100%; height: 100%; }
.scene-label { font-size: 12px; fill: #000; }
.cube-text { font: 700 10px "Liberation Sans", sans-serif; fill: #555; }
.cube-small { font-size: 7px; }
.floatbar { position: absolute; left: 413px; top: -1px; width: 400px; background: #dedede; }
.float-row { display: flex; align-items: center; gap: 16px; height: 28px; padding: 0 8px; }
.float-row .tool { gap: 2px; }
.float-row .arrow-far { margin-left: 14px; }
.sep { width: 1px; height: 24px; margin: 0 -4px 0 -6px; background: #b4b4b4; }
.float-row .float-close { margin-left: auto; }
.float-row.float-fields { gap: 5px; padding-left: 10px; }
.float-fields label { margin-left: 12px; }
.float-fields .spin { width: 96px; }

.right { flex: none; width: 7px; border-left: 1px solid #c0c0c0; background: #f2f2f2; }
.right-head { height: 29px; border-bottom: 1px solid #b4b4b4; }
.right-box { margin-left: 2px; border: 1px solid #b4b4b4; border-right: 0; background: linear-gradient(#dedede 25px, #f2f2f2 25px); }
.right-a { height: 70px; margin-top: 28px; }
.right-b { height: 93px; margin-top: 4px; }

.window { position: absolute; background: #f2f2f2; }
.window-sets { left: 416px; top: 207px; width: 827px; box-shadow: 0 0 30px rgba(0, 0, 0, .16); }
.window-assist { left: 571px; top: 374px; width: 513px; border: 1px solid #b4b4b4; box-shadow: 0 12px 34px 4px rgba(0, 0, 0, .32); }
.titlebar { display: flex; align-items: center; height: 30px; padding: 0 16px 0 8px; gap: 5px; background: #464646; color: #fff; }
.titlebar h1 { flex: 1; line-height: 21px; }
.titlebar .dim { color: #9c9c9c; }
.winbtn { display: flex; padding: 0; margin-left: 29px; }
.box { min-width: 0; margin: 0; padding: 0; border: 1px solid #b4b4b4; background: #f2f2f2; }
.box-head { height: 25px; padding: 0 11px; line-height: 25px; background: #dedede; color: #4a4a4a; }
.head-wide { padding: 0 14px; }
.sets-body { padding: 9px 9px 8px; }
.split { display: flex; gap: 10px; height: 453px; padding: 1px; }
.tree { width: 250px; border: 1px solid #b4b4b4; background: #fff; }
.tree-row { display: flex; align-items: center; height: 20px; padding-left: 5px; }
.chev { width: 8px; height: 6px; margin-right: 6px; }
.tree-text { flex: 1; height: 20px; line-height: 22px; padding-left: 6px; color: #333; }
.tree-child { padding-left: 36px; }
.tree-selected { margin-left: 2px; padding-left: 5px; background: #1a6ad2; color: #fff; text-decoration: underline; }
.box-set { flex: 1; display: flex; flex-direction: column; }
.box-records { flex: 1; margin: 10px; display: flex; flex-direction: column; }
.grid-frame { flex: 1; display: flex; margin: 2px; padding: 1px; border: 1px solid #b4b4b4; }
.grid-area { flex: 1; border: 1px solid #a8a8a8; border-right-width: 2px; background: #fff; }
.records { width: 100%; border-collapse: separate; border-spacing: 0; table-layout: fixed; }
.records th { height: 25px; padding: 1px 0 0 5px; border-right: 1px solid #c4c4c4; border-bottom: 1px solid #c4c4c4; background: #f2f2f2; text-align: left; font-weight: 400; }
.records th:last-child { border-right: 0; }
.c-mark { width: 25px; }
.c-active { width: 51px; }
.c-name { width: 60px; }
.c-cond { width: 172px; }
.side { display: flex; flex-direction: column; gap: 3px; padding: 2px 2px 0; border: 1px solid #b4b4b4; border-left: 0; }
.sq { display: flex; align-items: center; justify-content: center; width: 24px; height: 24px; border: 1px solid #b4b4b4; background: #fff; }
.sq-focus { border-color: #888; }
.sets-foot { display: flex; justify-content: flex-end; padding: 5px 7px 0 0; }
.btn { width: 69px; height: 22px; border: 1px solid #b4b4b4; background: #fff; color: #333; }
.btn:disabled { color: #999; }
.btn-wide { width: 80px; }
.assist-body { display: flex; flex-direction: column; gap: 4px; padding: 11px 11px 9px; }
.box-form { padding-bottom: 6px; }
.box-options { padding-bottom: 8px; }
.box-form .box-head { margin-bottom: 11px; }
.form-row { display: flex; align-items: center; height: 20px; margin: 0 11px 5px 10px; }
.form-row label { width: 179px; line-height: 21px; }
.form-row .combo { flex: 1; }
.form-row .icon-15 { margin: 0 2px 0 3px; }
.placeholder { color: #999; }
.combo-more::after { right: 21px; }
.dots { position: absolute; right: 4px; top: 8px; width: 8px; height: 2px; background: repeating-linear-gradient(90deg, #666 0 2px, transparent 2px 3px); }
.combo-focus::before { content: ""; position: absolute; inset: 1px 17px 1px 1px; border: 1px dotted #111; pointer-events: none; }
.assist-foot { display: flex; justify-content: flex-end; gap: 10px; padding-top: 8px; margin-right: -2px; }
.grip { position: absolute; right: 0; bottom: 0; width: 11px; height: 11px; }
.callout { position: absolute; left: 949px; top: 53px; width: 180px; height: 180px; pointer-events: none; }
```
